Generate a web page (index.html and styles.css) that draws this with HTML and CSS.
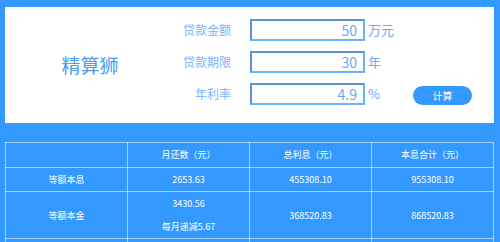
FILE: index.html
```
<!DOCTYPE html>
<html lang="zh">
<head>
<meta charset="utf-8">
<link rel="stylesheet" href="styles.css">
</head>
<body>
<div class="page">
  <div class="panel">
    <div class="brand">精算狮</div>
    <div class="form">
      <label class="lbl">贷款金额</label>
      <div class="field">50</div>
      <span class="unit">万元</span>
      <label class="lbl">贷款期限</label>
      <div class="field">30</div>
      <span class="unit">年</span>
      <label class="lbl">年利率</label>
      <div class="field">4.9</div>
      <span class="unit">%</span>
      <button class="calc">计算</button>
    </div>
  </div>
  <table class="result">
    <tr>
      <th></th>
      <th>月还数（元）</th>
      <th>总利息（元）</th>
      <th>本息合计（元）</th>
    </tr>
    <tr>
      <td>等额本息</td>
      <td>2653.63</td>
      <td>455308.10</td>
      <td>955308.10</td>
    </tr>
    <tr>
      <td>等额本金</td>
      <td>3430.56<br>每月递减5.67</td>
      <td>368520.83</td>
      <td>868520.83</td>
    </tr>
    <tr>
      <td>&nbsp;</td>
      <td>&nbsp;</td>
      <td>&nbsp;</td>
      <td>&nbsp;</td>
    </tr>
  </table>
</div>
</body>
</html>
```
FILE: styles.css
```
html, body {
  margin: 0;
  padding: 0;
  background: #3399ff;
  font-family: "Noto Sans CJK SC", "Noto Sans", sans-serif;
}
.page {
  padding: 7px 6px 0 5px;
  height: 242px;
  box-sizing: border-box;
  overflow: hidden;
}
.panel {
  background: #fff;
  height: 116px;
  box-sizing: border-box;
  display: flex;
  align-items: flex-start;
}
.brand {
  width: 170px;
  align-self: center;
  text-align: center;
  font-size: 19px;
  color: #4a9cf3;
  line-height: 1;
  margin-top: -2px;
}
.form {
  margin-top: 12px;
  display: grid;
  grid-template-columns: 56px 134px 48px 59px;
  grid-template-rows: 22px 22px 22px;
  row-gap: 10px;
}
.lbl {
  grid-column: 1;
  text-align: right;
  font-size: 12px;
  line-height: 22px;
  color: #79b4f6;
  white-space: nowrap;
}
.field {
  grid-column: 2;
  margin-left: 19px;
  width: 115px;
  box-sizing: border-box;
  height: 22px;
  border: 2px solid #5aa9ff;
  border-top-color: #5c93d6;
  border-left-color: #5c93d6;
  border-bottom-color: #66b2ff;
  border-right-color: #66b2ff;
  text-align: right;
  padding-right: 6px;
  font-size: 14px;
  line-height: 18px;
  color: #6aabf4;
}
.unit {
  grid-column: 3;
  padding-left: 3px;
  font-size: 13px;
  line-height: 22px;
  color: #6aabf4;
}
.calc {
  grid-column: 4;
  grid-row: 3;
  align-self: center;
  margin-top: 3px;
  width: 59px;
  height: 19px;
  border: none;
  border-radius: 10px;
  background: #3399ff;
  color: #fff;
  font-family: "Noto Sans CJK SC", sans-serif;
  font-size: 10px;
  padding: 0;
  line-height: 19px;
}
.result {
  margin-top: 19px;
  width: 489px;
  border-collapse: collapse;
  table-layout: fixed;
  color: #fff;
  font-size: 9px;
}
.result th, .result td {
  border: 1px solid rgba(255, 255, 255, 0.55);
  text-align: center;
  font-weight: normal;
  padding: 0;
  line-height: 23px;
}
.result th {
  height: 24px;
  line-height: 24px;
}
```
